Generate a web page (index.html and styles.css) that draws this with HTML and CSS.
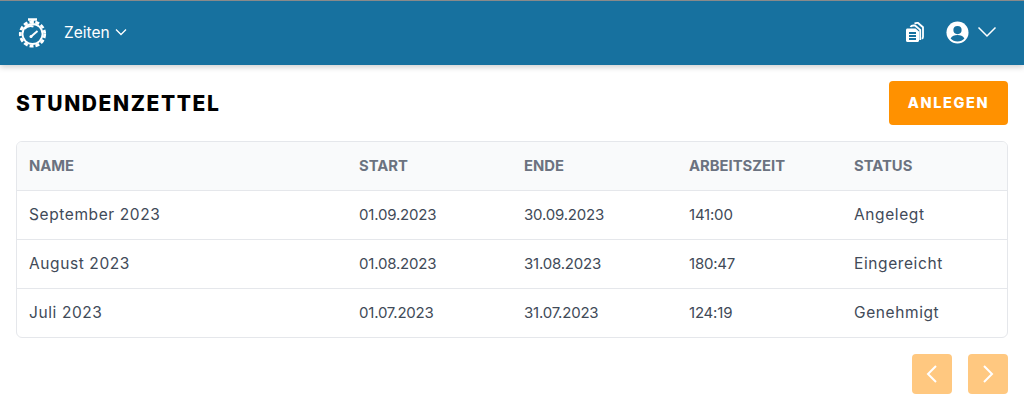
FILE: index.html
```html
<!DOCTYPE html>
<html lang="de">

<head>
  <meta charset="utf-8">
  <title>Stundenzettel</title>
  <link rel="stylesheet" href="styles.css">
</head>

<body>
  <header class="navbar">
    <div class="nav-left">
      <svg class="logo" width="32" height="32" viewBox="0 0 32 32" fill="none" stroke="#fff">
        <path d="M12 2.500h9M16.500 3v3" stroke-width="2.600"/>
        <circle cx="16.500" cy="17" r="12.200" stroke-width="2.800" stroke-dasharray="4 2"/>
        <circle cx="16.500" cy="17" r="10" stroke-width="1.800"/>
        <path d="M8.500 12c2-2.500 6-3.500 9-2.500" stroke-width="2"/>
        <path d="M14.500 20l7-6" stroke-width="2"/>
        <circle cx="15" cy="19.500" r="1.500" fill="#fff" stroke="none"/>
      </svg>
      <span class="nav-item">Zeiten</span>
      <svg width="12" height="8" viewBox="0 0 12 8" fill="none" stroke="#fff" stroke-width="1.300"><path d="M1 1.500l5 5 5-5"/></svg>
    </div>
    <div class="nav-right">
      <svg width="18" height="20" viewBox="0 0 18 20" fill="none" stroke="#fff" stroke-width="1.800">
        <path d="M8.500 1.500C9.500 1 10.500 .9 12 1l5 4.200V15c0 1-.4 1.500-1.300 1.700"/>
        <path d="M4.500 5C5 3.900 6 3.500 7.500 3.500H9l5.200 4.300V18"/>
        <path fill="#fff" stroke="none" fill-rule="evenodd" d="M1.500 6.500H9.500l3.500 3V18.500c0 .9-.6 1.500-1.500 1.500h-10C.6 20 0 19.400 0 18.500V8c0-.9.6-1.500 1.500-1.500zM3 10v2h7v-2zM3 13v2h7v-2zM3 16v2h7v-2z"/>
      </svg>
      <svg class="avatar" width="23" height="23" viewBox="0 0 24 24">
        <circle cx="12" cy="12" r="11.500" fill="#fff"/>
        <circle cx="12" cy="9.500" r="4.300" fill="#17719f"/>
        <path d="M4.800 18.200c1.600-3 4-3.700 7.200-3.700s5.600.7 7.200 3.700c-1.800 2-4.300 3.200-7.200 3.200s-5.400-1.200-7.200-3.200z" fill="#17719f"/>
      </svg>
      <svg width="20" height="12" viewBox="0 0 20 12" fill="none" stroke="#fff" stroke-width="1.500"><path d="M1.500 1.500L10 10l8.500-8.500"/></svg>
    </div>
  </header>

  <main class="content">
    <div class="title-row">
      <h1>STUNDENZETTEL</h1>
      <button class="btn-create">ANLEGEN</button>
    </div>

    <div class="table-box">
      <table>
        <thead>
          <tr>
            <th class="col-name">NAME</th>
            <th class="col-date">START</th>
            <th class="col-date">ENDE</th>
            <th class="col-date">ARBEITSZEIT</th>
            <th>STATUS</th>
          </tr>
        </thead>
        <tbody>
          <tr>
            <td class="word">September 2023</td>
            <td>01.09.2023</td>
            <td>30.09.2023</td>
            <td>141:00</td>
            <td class="word">Angelegt</td>
          </tr>
          <tr>
            <td class="word">August 2023</td>
            <td>01.08.2023</td>
            <td>31.08.2023</td>
            <td>180:47</td>
            <td class="word">Eingereicht</td>
          </tr>
          <tr>
            <td class="word">Juli 2023</td>
            <td>01.07.2023</td>
            <td>31.07.2023</td>
            <td>124:19</td>
            <td class="word">Genehmigt</td>
          </tr>
        </tbody>
      </table>
    </div>

    <div class="pager">
      <button class="btn-page">
        <svg width="12" height="20" viewBox="0 0 12 20" fill="none" stroke="#fff" stroke-width="2"><path d="M10 2l-8 8 8 8"/></svg>
      </button>
      <button class="btn-page">
        <svg width="12" height="20" viewBox="0 0 12 20" fill="none" stroke="#fff" stroke-width="2"><path d="M2 2l8 8-8 8"/></svg>
      </button>
    </div>
  </main>
</body>

</html>
```

FILE: styles.css
```css
* {
  box-sizing: border-box;
}

body {
  margin: 0;
  font-family: Inter, "Open Sans", sans-serif;
  background-color: #fff;
  overflow: hidden;
}

.navbar {
  height: 65px;
  background-color: #17719f;
  border-top: 1px solid #8a8a8a;
  box-shadow: 0 2px 6px rgba(0, 0, 0, 0.2);
  display: flex;
  align-items: center;
  justify-content: space-between;
  padding: 0 27px 2px 16px;
}

.nav-left,
.nav-right {
  display: flex;
  align-items: center;
}

.nav-item {
  color: #fff;
  font-size: 15.5px;
  margin: 0 5px 0 16px;
}

.logo {
  display: block;
  margin-top: 2px;
}

.avatar {
  margin: 0 8px 0 22px;
}

.content {
  padding: 16px;
}

.title-row {
  display: flex;
  align-items: center;
  justify-content: space-between;
  height: 44px;
  margin-bottom: 16px;
}

h1 {
  margin: 0;
  font-size: 21px;
  font-weight: 800;
  letter-spacing: 1.6px;
  color: #000;
}

.btn-create {
  width: 119px;
  height: 44px;
  border: 0;
  border-radius: 4px;
  background-color: #ff9100;
  color: #fff;
  font-family: inherit;
  font-size: 14.5px;
  font-weight: 800;
  letter-spacing: 1.6px;
  padding: 0 0 2px;
}

.table-box {
  border: 1px solid #e5e7eb;
  border-radius: 6px;
  overflow: hidden;
}

table {
  width: 100%;
  border-collapse: collapse;
  table-layout: fixed;
  font-size: 15px;
  letter-spacing: -0.2px;
  color: #414a58;
}

th,
td {
  height: 49px;
  padding: 0 12px;
  text-align: left;
}

th {
  height: 48px;
  background-color: #f9fafb;
  color: #6b7280;
  font-size: 14.8px;
  font-weight: 700;
  letter-spacing: 0;
}

.word {
  font-size: 15.5px;
  letter-spacing: 0.6px;
}

.col-name {
  width: 330px;
}

.col-date {
  width: 165px;
}

tr {
  border-top: 1px solid #e5e7eb;
}

thead tr {
  border-top: 0;
}

.pager {
  display: flex;
  justify-content: flex-end;
  gap: 16px;
  margin-top: 16px;
}

.btn-page {
  width: 40px;
  height: 40px;
  border: 0;
  border-radius: 4px;
  background-color: #ffc880;
  display: flex;
  align-items: center;
  justify-content: center;
  padding: 0;
}
```
